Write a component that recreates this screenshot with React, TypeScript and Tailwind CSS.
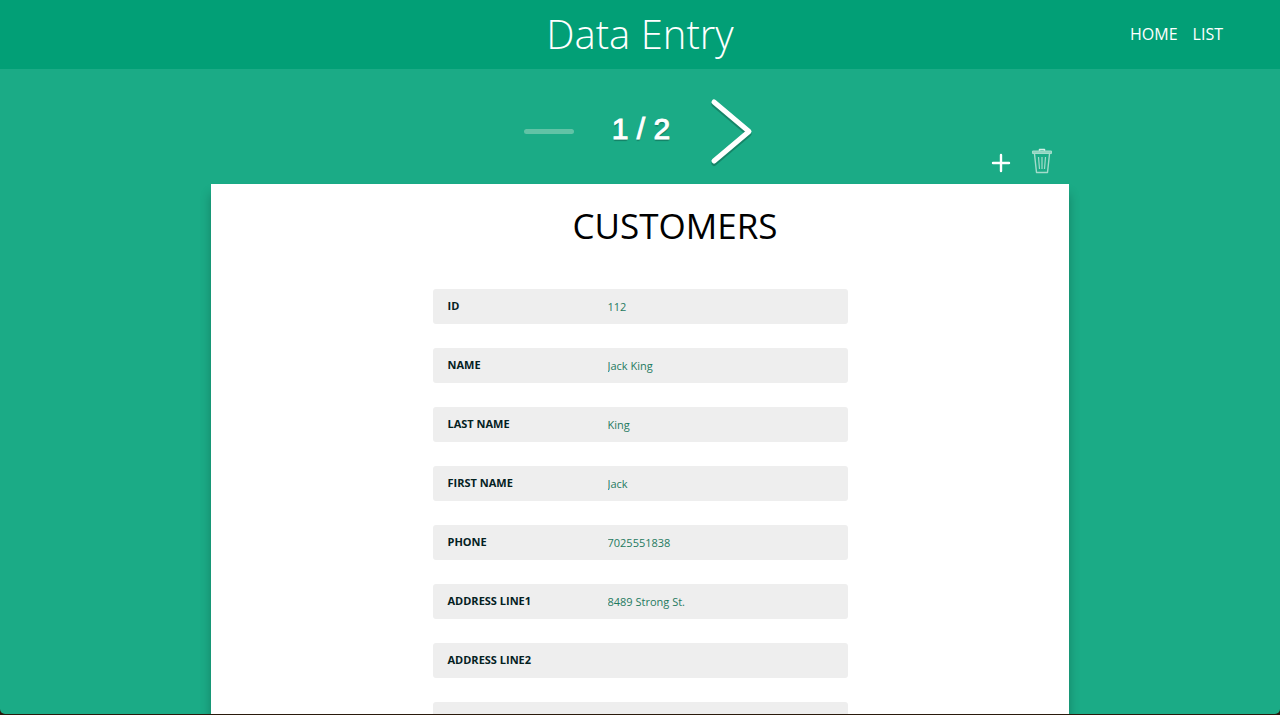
type Field = { id: string; label: string; value: string };

const fields: Field[] = [
  { id: "customer-id", label: "ID", value: "112" },
  { id: "name", label: "NAME", value: "Jack King" },
  { id: "last-name", label: "LAST NAME", value: "King" },
  { id: "first-name", label: "FIRST NAME", value: "Jack" },
  { id: "phone", label: "PHONE", value: "7025551838" },
  { id: "address-line1", label: "ADDRESS LINE1", value: "8489 Strong St." },
  { id: "address-line2", label: "ADDRESS LINE2", value: "" },
  { id: "city", label: "", value: "" },
];

function Header() {
  return (
    <header className="grid h-[69px] shrink-0 grid-cols-[1fr_auto_1fr] items-center bg-[#029f76] pb-0.5 text-white">
      <h1 className="col-start-2 text-[40px] leading-[68px] font-light">Data Entry</h1>
      <nav className="flex gap-[15px] justify-self-end pr-[57px] text-base">
        <a href="#home">HOME</a>
        <a href="#list">LIST</a>
      </nav>
    </header>
  );
}

function Pager() {
  return (
    <div className="col-start-2 flex items-center gap-[38px] pt-[10px] pr-[2px]">
      <button type="button" disabled aria-label="Previous record" className="h-[5px] w-[50px] rounded-sm bg-[#61c3a6]" />
      <span className="pb-[6px] font-['Liberation_Sans',Arial,sans-serif] text-[30px] leading-9 text-shadow-[0_2px_1px_rgba(0,0,0,0.25)] [-webkit-text-stroke:1px_white]">
        1 / 2
      </span>
      <button type="button" aria-label="Next record">
        <svg width="46" height="70" viewBox="0 0 46 70" fill="none" strokeLinecap="round" strokeLinejoin="round" strokeWidth="5">
          <path d="M6 6 41 35.500 6 65" stroke="#000" strokeOpacity="0.22" transform="translate(0 1.500)" />
          <path d="M6 5 41 34.500 6 64" stroke="#fff" />
        </svg>
      </button>
    </div>
  );
}

function Toolbar() {
  return (
    <div className="flex items-center gap-5 self-end justify-self-end pr-4 pb-2">
      <button type="button" aria-label="Add record">
        <svg width="20" height="28" viewBox="0 0 20 28" stroke="#fff" strokeLinecap="round">
          <path d="M10 7V23M2 15H18" strokeWidth="2.400" />
        </svg>
      </button>
      <button type="button" aria-label="Delete record">
        <svg width="22" height="28" viewBox="0 0 22 28" fill="none" stroke="#a3dccb" strokeLinejoin="round">
          <path d="M8.500 3V1.500H13.500V3" stroke="#d5f0e8" strokeWidth="1.500" />
          <path d="M1.500 3H20.500V5.500H1.500Z" fill="#8fd5c0" strokeWidth="1" />
          <path d="M3.500 6 5.500 24.500H16.500L18.500 6" strokeWidth="1.400" />
          <path d="M7.500 9 8.500 21M11 9V21M14.500 9 13.500 21" strokeWidth="1.200" />
        </svg>
      </button>
    </div>
  );
}

function FieldRow({ field }: { field: Field }) {
  return (
    <div className="flex h-[35px] shrink-0 items-center rounded-[3px] bg-[#eeeeee] px-[15px] text-[11px] leading-4">
      <label htmlFor={field.id} className="w-39 shrink-0 pb-0.5 font-bold text-[#04211f]">
        {field.label}
      </label>
      <input
        id={field.id}
        defaultValue={field.value}
        aria-label={field.label ? undefined : field.id}
        className="min-w-0 flex-1 bg-transparent pt-px pl-1 text-[#1f7a60] outline-none"
      />
    </div>
  );
}

export default function App() {
  return (
    <div className="h-screen overflow-hidden bg-[#2a1a0c] font-['Open_Sans','Noto_Sans',sans-serif]">
      <div className="flex h-full flex-col pb-px">
        <div className="flex min-h-0 flex-1 flex-col overflow-hidden rounded-b-[5px] bg-[#1bab86]">
          <Header />
          <main className="mx-auto flex min-h-0 w-[67%] flex-1 flex-col">
            <div className="grid h-[115px] shrink-0 grid-cols-[1fr_auto_1fr] text-white">
              <Pager />
              <Toolbar />
            </div>
            <section className="flex flex-col items-center bg-white pb-10 shadow-[0_10px_10px_rgba(0,0,0,0.25)]">
              <h2 className="pt-[18px] pb-[39px] pl-[70px] text-[35px] leading-[48px] text-black">CUSTOMERS</h2>
              <form className="flex w-full max-w-[415px] flex-col gap-6">
                {fields.map((field) => (
                  <FieldRow key={field.id} field={field} />
                ))}
              </form>
            </section>
          </main>
        </div>
      </div>
    </div>
  );
}
